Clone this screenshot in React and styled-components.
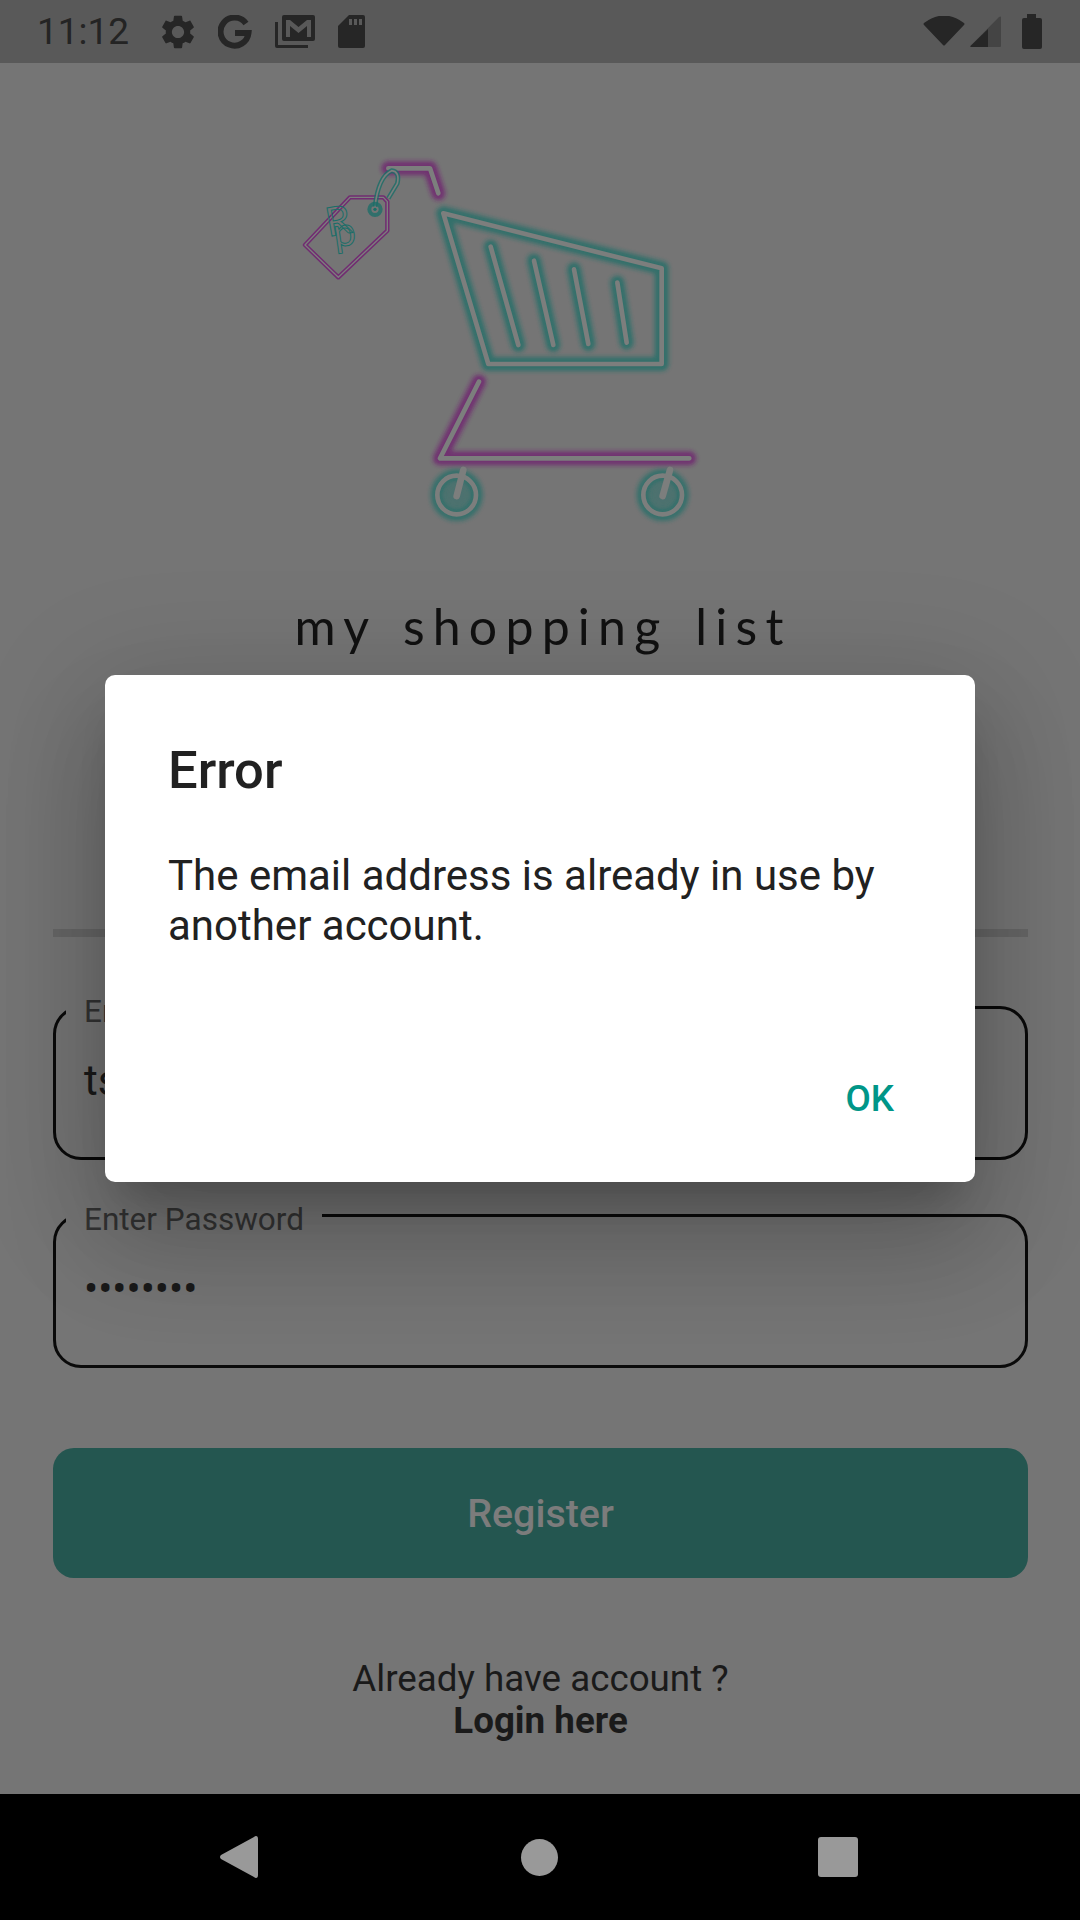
// App.jsx
import React from 'react';
import styled, { createGlobalStyle } from 'styled-components';

const GlobalStyle = createGlobalStyle`
    html, body {
        margin: 0;
        padding: 0;
        background: #757575;
    }
    * {
        box-sizing: border-box;
    }
`;

const Screen = styled.div`
    position: relative;
    width: 1080px;
    height: 1920px;
    display: flex;
    flex-direction: column;
    overflow: hidden;
    background: #757575;
    font-family: Roboto, "Liberation Sans", sans-serif;
`;

const StatusBar = styled.div`
    height: 63px;
    flex-shrink: 0;
    display: flex;
    align-items: center;
    padding: 0 38px 0 37px;
    background: #595959;
    color: #262626;
`;

const Time = styled.span`
    font-size: 37px;
    line-height: 63px;
    margin-right: 32px;
    color: #242424;
`;

const StatusIcons = styled.div`
    display: flex;
    align-items: center;
    gap: ${(p) => p.$gap}px;
    margin-left: ${(p) => (p.$right ? 'auto' : '0')};
`;

const BatterySlot = styled.div`
    display: flex;
    margin-left: 20px;
`;

const Main = styled.main`
    flex: 1;
    display: flex;
    flex-direction: column;
    padding: 0 52px 0 53px;
`;

const LogoWrap = styled.div`
    margin: 77px 0 0 227px;
    height: 400px;
`;

const Brand = styled.h1`
    margin: 56px 0 0 0;
    padding-left: 5px;
    font-family: Lato, "Open Sans", sans-serif;
    font-size: 50px;
    font-weight: 400;
    line-height: 60px;
    letter-spacing: 8.2px;
    word-spacing: 6px;
    color: #111;
    text-align: center;
`;

const Divider = styled.div`
    height: 8px;
    margin-top: 273px;
    background: #666;
`;

const Field = styled.fieldset`
    margin: ${(p) => p.$top}px 0 0 0;
    padding: 0 28px;
    height: 176px;
    border: 3px solid #0a0a0a;
    border-radius: 28px;
    min-width: 0;
`;

const FieldLabel = styled.legend`
    margin-left: -18px;
    padding: 10px 18px 0 18px;
    font-size: 31.5px;
    line-height: 36px;
    color: #333;
`;

const FieldValue = styled.div`
    font-size: 42px;
    line-height: 50px;
    margin-top: 26px;
    color: #1a1a1a;
`;

const RegisterButton = styled.button`
    height: 130px;
    margin-top: 80px;
    border: 0;
    border-radius: 21px;
    background: #245650;
    color: #7c7c7c;
    font-family: Roboto, sans-serif;
    font-size: 39.4px;
    font-weight: 500;
`;

const Footer = styled.p`
    margin: 80px 0 0 0;
    text-align: center;
    font-size: 36.75px;
    line-height: 42px;
    color: #1a1a1a;
`;

const FooterLink = styled.b`
    display: block;
    font-weight: 700;
`;

const NavBar = styled.nav`
    height: 126px;
    flex-shrink: 0;
    display: flex;
    align-items: center;
    justify-content: space-between;
    padding: 0 222px 0 220px;
    background: #000;
`;

const NavCircle = styled.div`
    width: 37px;
    height: 37px;
    margin-left: 3px;
    border-radius: 50%;
    background: #999;
`;

const NavSquare = styled.div`
    width: 40px;
    height: 40px;
    border-radius: 3px;
    background: #999;
`;

const DialogLayer = styled.div`
    position: absolute;
    top: 63px;
    left: 0;
    right: 0;
    bottom: 126px;
    display: flex;
    align-items: center;
    justify-content: center;
`;

const Dialog = styled.div`
    width: 870px;
    height: 507px;
    display: flex;
    flex-direction: column;
    padding: 64px 64px 0 63px;
    background: #fff;
    border-radius: 10px;
    box-shadow: 0 29px 39px -18px rgba(0, 0, 0, 0.2), 0 63px 100px 8px rgba(0, 0, 0, 0.14), 0 24px 121px 21px rgba(0, 0, 0, 0.12);
`;

const DialogTitle = styled.h2`
    margin: 0;
    font-size: 52.5px;
    font-weight: 500;
    line-height: 62px;
    color: #212121;
`;

const DialogBody = styled.p`
    margin: 50px 0 0 0;
    font-size: 42px;
    line-height: 50px;
    color: #212121;
`;

const DialogAction = styled.button`
    align-self: flex-end;
    margin: 126px 17px 0 0;
    padding: 0;
    border: 0;
    background: none;
    font-family: Roboto, sans-serif;
    font-size: 36.75px;
    font-weight: 500;
    color: #009688;
`;

const Gear = () => (
    <svg width="34" height="34" viewBox="2 2 20 20" fill="#262626">
        <path d="M19.14 12.94c.04-.3.06-.61.06-.94 0-.32-.02-.64-.07-.94l2.03-1.58c.18-.14.23-.41.12-.61l-1.92-3.32c-.12-.22-.37-.29-.59-.22l-2.39.96c-.5-.38-1.03-.7-1.62-.94l-.36-2.54c-.04-.24-.24-.41-.48-.41h-3.84c-.24 0-.43.17-.47.41l-.36 2.54c-.59.24-1.13.57-1.62.94l-2.39-.96c-.22-.08-.47 0-.59.22L2.74 8.87c-.12.21-.08.47.12.61l2.03 1.58c-.05.3-.09.63-.09.94s.02.64.07.94l-2.03 1.58c-.18.14-.23.41-.12.61l1.92 3.32c.12.22.37.29.59.22l2.39-.96c.5.38 1.03.7 1.62.94l.36 2.54c.05.24.24.41.48.41h3.84c.24 0 .44-.17.47-.41l.36-2.54c.59-.24 1.13-.56 1.62-.94l2.39.96c.22.08.47 0 .59-.22l1.92-3.32c.12-.22.07-.47-.12-.61l-2.01-1.58zM12 15.6c-1.98 0-3.6-1.62-3.6-3.6s1.62-3.6 3.6-3.6 3.6 1.62 3.6 3.6-1.62 3.6-3.6 3.6z" />
    </svg>
);

const GoogleG = () => (
    <svg width="34" height="34" viewBox="0 0 34 34" fill="none" stroke="#262626" strokeWidth="6">
        <path d="M28 8.500 A14 14 0 1 0 30.500 18 H17" />
    </svg>
);

const GmailStack = () => (
    <svg width="40" height="33" viewBox="0 0 40 33">
        <path fill="#262626" d="M0 7h3v23h30v3H2q-2 0-2-2z" />
        <path fill="#262626" fillRule="evenodd" d="M9 0h29q2 0 2 2v22q0 2-2 2H9q-2 0-2-2V2q0-2 2-2zM11 5v17h4V11l8.500 7 8.500-7v11h4V5h-4l-8.500 7-8.500-7z" />
    </svg>
);

const SdCard = () => (
    <svg width="27" height="33" viewBox="0 0 27 33">
        <path fill="#262626" d="M11 0h14q2 0 2 2v29q0 2-2 2H2q-2 0-2-2V11z" />
        <path fill="#595959" d="M11 4h3v6h-3zM16 4h3v6h-3zM21 4h3v6h-3z" />
    </svg>
);

const Wifi = () => (
    <svg width="42" height="32" viewBox="0 2 42 32">
        <path fill="#262626" d="M1 9Q21-6 41 9q1 1 0 2L22 31q-1 1-2 0L1 11q-1-1 0-2z" />
    </svg>
);

const Signal = () => (
    <svg width="32" height="32" viewBox="0 0 32 32">
        <path fill="#444" d="M31 1v29q0 1-1 1H1q-1 0-.500-1L29 1q2-1 2 0z" />
        <path fill="#262626" d="M18 13v18H1q-1 0-.500-1z" />
    </svg>
);

const Battery = () => (
    <svg width="20" height="35" viewBox="0 0 20 35">
        <path fill="#262626" d="M5 0h9v4h4q2 0 2 2v27q0 2-2 2H2q-2 0-2-2V6q0-2 2-2h3z" />
    </svg>
);

const BackIcon = () => (
    <svg width="38" height="42" viewBox="0 0 38 42">
        <path fill="#999" d="M36 0q2 0 2 3v36q0 3-2 3-1 0-2-1L1 23q-2-2 0-4L34 1q1-1 2-1z" />
    </svg>
);

const TEAL = '#1a6e68';
const PURPLE = '#701a70';
const CORE = '#7c7e7d';

const NeonLine = ({ d, color }) => (
    <g fill="none" strokeLinecap="round" strokeLinejoin="round">
        <path d={d} stroke={color} strokeWidth="42" opacity="0.75" filter="url(#glow)" />
        <path d={d} stroke={CORE} strokeWidth="14" />
    </g>
);

const Wheel = ({ x, spokeX }) => (
    <g>
        <circle cx={x} cy="1065" r="58" fill="none" stroke={TEAL} strokeWidth="40" opacity="0.7" filter="url(#glow)" />
        <circle cx={x} cy="1065" r="38" fill={TEAL} opacity="0.45" filter="url(#glow)" />
        <circle cx={x} cy="1065" r="58" fill="none" stroke={CORE} strokeWidth="14" />
        <path d={`M${spokeX} 990 L${x} 1068`} stroke={CORE} strokeWidth="20" strokeLinecap="round" />
    </g>
);

const CartLogo = () => (
    <svg width="440" height="400" viewBox="0 0 1320 1200">
        <defs>
            <filter id="glow" x="0" y="0" width="1320" height="1200" filterUnits="userSpaceOnUse">
                <feGaussianBlur stdDeviation="6" />
            </filter>
        </defs>
        <NeonLine color={PURPLE} d="M325 85 H450 L475 160" />
        <NeonLine color={TEAL} d="M490 220 L1145 385 V672 H625 Z" />
        <NeonLine color={TEAL} d="M632 320 L715 615" />
        <NeonLine color={TEAL} d="M762 362 L820 615" />
        <NeonLine color={TEAL} d="M882 388 L925 612" />
        <NeonLine color={TEAL} d="M1012 428 L1040 608" />
        <NeonLine color={PURPLE} d="M597 725 L480 955 H1228" />
        <Wheel x={530} spokeX={550} />
        <Wheel x={1148} spokeX={1170} />
        <path d="M210 172 H310 L322 185 V272 L175 412 L75 315 Z" fill="none" stroke={PURPLE} strokeWidth="13" strokeLinejoin="round" opacity="0.8" />
        <path d="M210 172 H310 L322 185 V272 L175 412 L75 315 Z" fill="none" stroke={CORE} strokeWidth="4" strokeLinejoin="round" />
        <path d="M285 200 Q295 110 335 92 Q360 95 352 130 L325 175" fill="none" stroke={TEAL} strokeWidth="14" opacity="0.8" />
        <path d="M285 200 Q295 110 335 92 Q360 95 352 130 L325 175" fill="none" stroke={CORE} strokeWidth="5" />
        <circle cx="285" cy="208" r="17" fill="none" stroke={TEAL} strokeWidth="12" opacity="0.75" />
        <circle cx="285" cy="208" r="5" fill={TEAL} />
        <g fontFamily="Lato, sans-serif" fontSize="120" fill="none" stroke={TEAL} strokeWidth="3">
            <text transform="translate(145 290) rotate(-10)">R</text>
            <text transform="translate(165 322) rotate(-8)">p</text>
        </g>
    </svg>
);

export default function App() {
    return (
        <Screen>
            <GlobalStyle />
            <StatusBar>
                <Time>11:12</Time>
                <StatusIcons $gap={23}>
                    <Gear />
                    <GoogleG />
                    <GmailStack />
                    <SdCard />
                </StatusIcons>
                <StatusIcons $right $gap={5}>
                    <Wifi />
                    <Signal />
                </StatusIcons>
                <BatterySlot>
                    <Battery />
                </BatterySlot>
            </StatusBar>
            <Main>
                <LogoWrap>
                    <CartLogo />
                </LogoWrap>
                <Brand>my shopping list</Brand>
                <Divider />
                <Field $top={47}>
                    <FieldLabel>Enter Email</FieldLabel>
                    <FieldValue>ts</FieldValue>
                </Field>
                <Field $top={32}>
                    <FieldLabel>Enter Password</FieldLabel>
                    <FieldValue>••••••••</FieldValue>
                </Field>
                <RegisterButton>Register</RegisterButton>
                <Footer>
                    Already have account ?
                    <FooterLink>Login here</FooterLink>
                </Footer>
            </Main>
            <NavBar>
                <BackIcon />
                <NavCircle />
                <NavSquare />
            </NavBar>
            <DialogLayer>
                <Dialog>
                    <DialogTitle>Error</DialogTitle>
                    <DialogBody>The email address is already in use by another account.</DialogBody>
                    <DialogAction>OK</DialogAction>
                </Dialog>
            </DialogLayer>
        </Screen>
    );
}
